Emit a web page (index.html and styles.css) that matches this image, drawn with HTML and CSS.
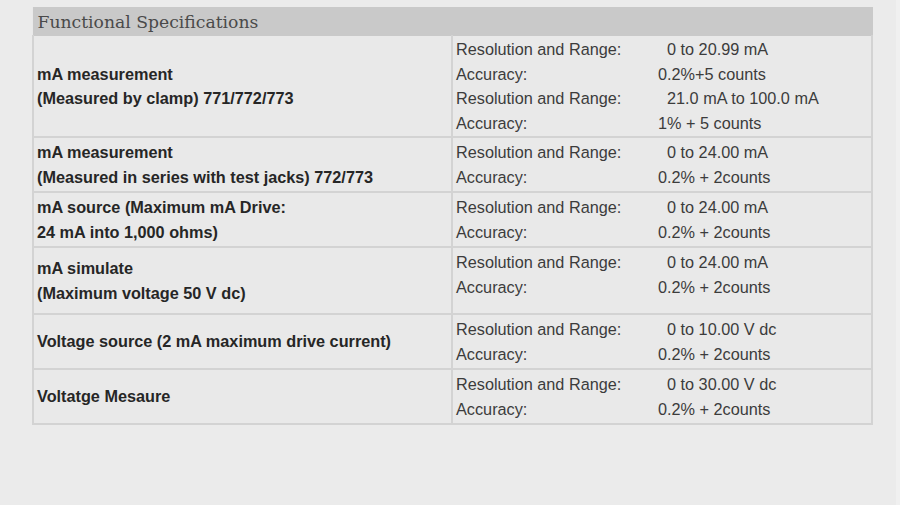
FILE: index.html
```html
<!DOCTYPE html>
<html>
<head>
<meta charset="utf-8">
<link rel="stylesheet" href="styles.css">
</head>
<body>
<div class="page">
  <table class="specs">
    <thead>
      <tr><th colspan="2">Functional Specifications</th></tr>
    </thead>
    <tbody>
      <tr class="first">
        <td class="name">mA measurement<br>(Measured by clamp) 771/772/773</td>
        <td class="vals">
          <div class="line"><span class="lbl">Resolution and Range:</span><span class="rng">0 to 20.99 mA</span></div>
          <div class="line"><span class="lbl">Accuracy:</span><span class="acc">0.2%+5 counts</span></div>
          <div class="line"><span class="lbl">Resolution and Range:</span><span class="rng">21.0 mA to 100.0 mA</span></div>
          <div class="line"><span class="lbl">Accuracy:</span><span class="acc">1% + 5 counts</span></div>
        </td>
      </tr>
      <tr>
        <td class="name">mA measurement<br>(Measured in series with test jacks) 772/773</td>
        <td class="vals">
          <div class="line"><span class="lbl">Resolution and Range:</span><span class="rng">0 to 24.00 mA</span></div>
          <div class="line"><span class="lbl">Accuracy:</span><span class="acc">0.2% + 2counts</span></div>
        </td>
      </tr>
      <tr>
        <td class="name">mA source (Maximum mA Drive:<br>24 mA into 1,000 ohms)</td>
        <td class="vals">
          <div class="line"><span class="lbl">Resolution and Range:</span><span class="rng">0 to 24.00 mA</span></div>
          <div class="line"><span class="lbl">Accuracy:</span><span class="acc">0.2% + 2counts</span></div>
        </td>
      </tr>
      <tr>
        <td class="name">mA simulate<br>(Maximum voltage 50 V dc)</td>
        <td class="vals extra">
          <div class="line"><span class="lbl">Resolution and Range:</span><span class="rng">0 to 24.00 mA</span></div>
          <div class="line"><span class="lbl">Accuracy:</span><span class="acc">0.2% + 2counts</span></div>
        </td>
      </tr>
      <tr>
        <td class="name">Voltage source (2 mA maximum drive current)</td>
        <td class="vals">
          <div class="line"><span class="lbl">Resolution and Range:</span><span class="rng">0 to 10.00 V dc</span></div>
          <div class="line"><span class="lbl">Accuracy:</span><span class="acc">0.2% + 2counts</span></div>
        </td>
      </tr>
      <tr>
        <td class="name">Voltatge Mesaure</td>
        <td class="vals">
          <div class="line"><span class="lbl">Resolution and Range:</span><span class="rng">0 to 30.00 V dc</span></div>
          <div class="line"><span class="lbl">Accuracy:</span><span class="acc">0.2% + 2counts</span></div>
        </td>
      </tr>
    </tbody>
  </table>
</div>
</body>
</html>
```

FILE: styles.css
```css
html, body {
  margin: 0;
  padding: 0;
}
body {
  background: #f0f0f0;
}
.page {
  width: 896px;
  height: 505px;
  padding: 7px 0 0 32px;
  box-sizing: border-box;
  background: #ebebeb;
}
.specs {
  width: 841px;
  border-collapse: collapse;
  font-family: "Liberation Sans", Arial, sans-serif;
  font-size: 16.25px;
  background: #e9e9e9;
}
.specs th {
  background: #c9c9c9;
  color: #4a4a4a;
  font-family: "DejaVu Serif", serif;
  font-weight: normal;
  font-size: 17.2px;
  text-align: left;
  height: 28px;
  padding: 0 0 0 4px;
  box-sizing: border-box;
  line-height: 26px;
  border: 1px solid #c9c9c9;
}
.specs td {
  border: 2px solid #d3d3d3;
  padding: 2px 4px 2px 3px;
  line-height: 24.5px;
}
.specs tr.first td {
  border-top: none;
  padding-top: 1px;
  padding-bottom: 1px;
}
.specs td.name {
  width: 410px;
  vertical-align: middle;
  font-weight: bold;
  color: #262626;
}
.specs td.vals {
  vertical-align: top;
  color: #3c3c3c;
  padding-left: 3px;
}
.specs td.vals.extra {
  padding-bottom: 14px;
}
.line {
  display: flex;
}
.lbl {
  width: 202px;
  flex: none;
}
.rng {
  padding-left: 9px;
}
```
